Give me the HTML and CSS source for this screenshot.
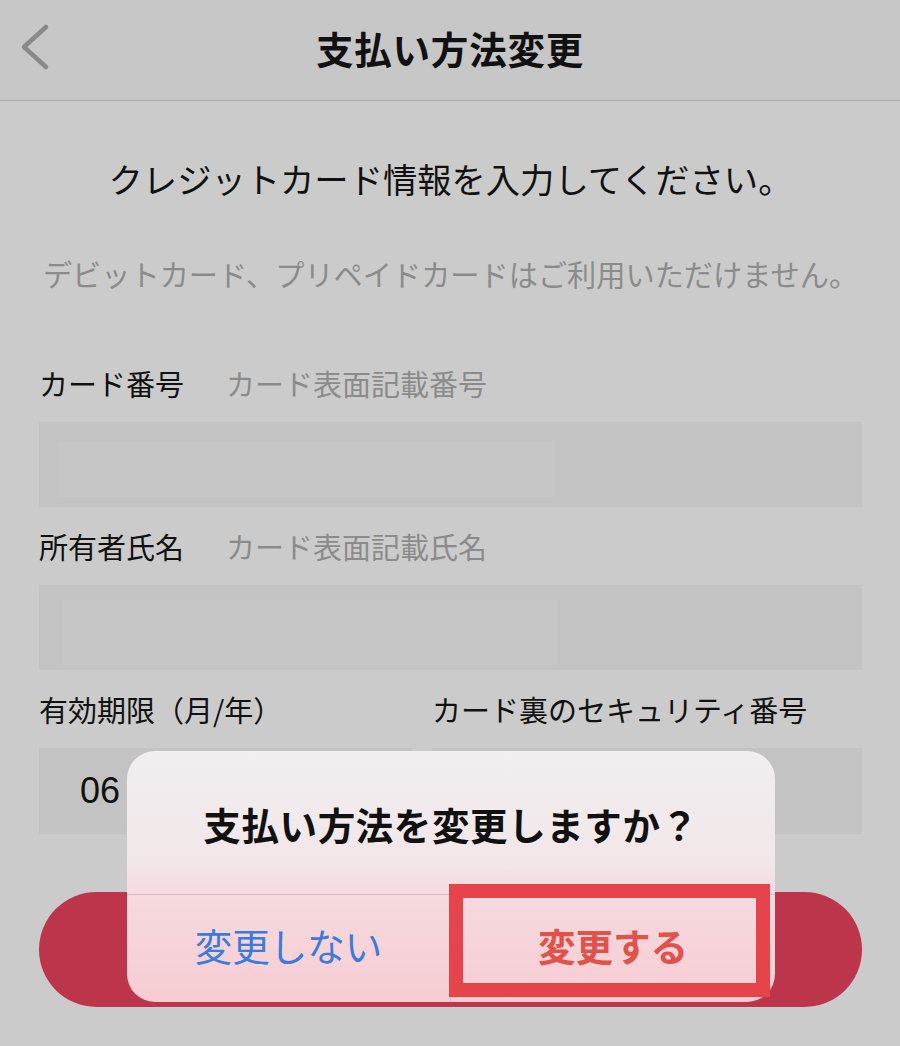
FILE: index.html
```html
<!DOCTYPE html>
<html lang="ja">
<head>
    <meta charset="utf-8">
    <title>支払い方法変更</title>
    <link rel="stylesheet" href="styles.css">
</head>
<body>
    <!-- Header -->
    <div class="header">
        <a class="back" href="#">
            <svg width="60" height="100" viewBox="0 0 60 100">
                <polyline points="46,27 24,47 46,67" fill="none" stroke="#8a8a8a" stroke-width="4.5" stroke-linecap="round" stroke-linejoin="round"/>
            </svg>
        </a>
        <div class="header-title">支払い方法変更</div>
    </div>

    <div class="container">
        <p class="lead">クレジットカード情報を入力してください。</p>
        <p class="notice">デビットカード、プリペイドカードはご利用いただけません。</p>

        <div class="field">
            <div class="label">カード番号<span class="hint">カード表面記載番号</span></div>
            <div class="input"><div class="masked masked-1"></div></div>
        </div>

        <div class="field">
            <div class="label">所有者氏名<span class="hint">カード表面記載氏名</span></div>
            <div class="input"><div class="masked masked-2"></div></div>
        </div>

        <div class="field-row">
            <div class="field">
                <div class="label">有効期限（月/年）</div>
                <div class="input input-value">06</div>
            </div>
            <div class="field">
                <div class="label">カード裏のセキュリティ番号</div>
                <div class="input"></div>
            </div>
        </div>

        <button class="submit"></button>
    </div>

    <!-- Confirm dialog -->
    <div class="dialog">
        <div class="dialog-title">支払い方法を変更しますか？</div>
        <div class="dialog-actions">
            <button class="dialog-btn cancel">変更しない</button>
            <button class="dialog-btn confirm">変更する</button>
        </div>
        <div class="highlight"></div>
    </div>
</body>
</html>
```

FILE: styles.css
```css
body {
    font-family: "Noto Sans CJK JP", "Noto Sans", sans-serif;
    margin: 0;
    padding: 0;
    background-color: #cbcbcb;
    color: #111;
    width: 900px;
    height: 1046px;
    overflow: hidden;
    position: relative;
}
/* Header */
.header {
    height: 100px;
    border-bottom: 1px solid #a9a9a9;
    background-color: #c7c7c7;
    display: grid;
    grid-template-columns: 1fr auto 1fr;
    align-items: center;
}
.back {
    display: block;
    height: 100px;
}
.back svg {
    display: block;
}
.header-title {
    font-size: 37.5px;
    font-weight: bold;
    letter-spacing: 0.8px;
    padding-bottom: 6px;
}
/* Form */
.container {
    padding: 0 38px 0 39px;
}
.lead {
    margin: 53px 0 0;
    font-size: 34.3px;
    line-height: 48px;
    text-align: center;
}
.notice {
    margin: 50px 0 0;
    font-size: 29.2px;
    line-height: 42px;
    text-align: center;
    color: #8b8b8b;
}
.field {
    margin-top: 68px;
}
.field + .field,
.field-row {
    margin-top: 18px;
}
.field-row .field {
    margin-top: 0;
}
.label {
    font-size: 29px;
    line-height: 42px;
    margin-bottom: 18px;
    white-space: nowrap;
}
.hint {
    color: #8b8b8b;
    margin-left: 42px;
}
.input {
    height: 85px;
    background-color: #c3c3c3;
    box-sizing: border-box;
    padding: 19px 0 0 20px;
}
.masked {
    height: 56px;
    width: 496px;
    background-color: #c6c6c6;
}
.masked-2 {
    margin-left: 3px;
    margin-top: -4px;
    height: 65px;
}
.field-row {
    display: grid;
    grid-template-columns: 373px 1fr;
    gap: 20px;
}
.field-row .input {
    height: 86px;
}
.input-value {
    font-family: "Liberation Sans", Arial, sans-serif;
    font-size: 36px;
    line-height: 86px;
    padding: 0 0 0 41px;
}
.submit {
    display: block;
    width: 100%;
    height: 115px;
    margin-top: 58px;
    border: none;
    border-radius: 58px;
    background-color: #bd354a;
}
/* Dialog */
.dialog {
    position: absolute;
    left: 127px;
    top: 751px;
    width: 648px;
    height: 251px;
    border-radius: 28px;
    background: linear-gradient(#f1eff0 0%, #f2e6e9 45%, #f5dade 58%, #f7ccd3 100%);
    display: flex;
    flex-direction: column;
}
.dialog-title {
    height: 144px;
    display: flex;
    align-items: center;
    justify-content: center;
    font-size: 37.5px;
    font-weight: bold;
    letter-spacing: 0.6px;
    padding-top: 2px;
    box-sizing: border-box;
    border-bottom: 1px solid #d6bfc3;
}
.dialog-actions {
    flex: 1;
    display: grid;
    grid-template-columns: 1fr 1fr;
}
.dialog-btn {
    font-family: "Noto Sans CJK JP", "Noto Sans", sans-serif;
    font-size: 37.5px;
    background: none;
    border: none;
    padding: 0 0 8px;
    cursor: pointer;
}
.cancel {
    color: #3b7bdb;
    border-right: 1px solid #d6bfc3;
}
.confirm {
    color: #e0524a;
    font-weight: bold;
}
.highlight {
    position: absolute;
    left: 322px;
    top: 133px;
    width: 321px;
    height: 113px;
    box-sizing: border-box;
    border: 14px solid #e6444b;
}
```
